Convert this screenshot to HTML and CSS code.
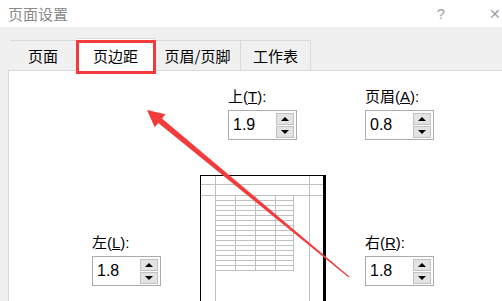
FILE: index.html
```html
<!doctype html>
<html lang="zh-CN">
<head>
    <meta charset="utf-8">
    <title>页面设置</title>
    <link rel="stylesheet" href="styles.css">
</head>
<body>
	<div class="dialog">
		<div class="titlebar">
			<span class="title">页面设置</span>
			<span class="help">?</span>
			<span class="close">&#x2715;</span>
		</div>
		<div class="cuerpo">
			<div class="tabs">
				<div class="tab t1">页面</div>
				<div class="tab t2 activa">页边距</div>
				<div class="tab t3">页眉/页脚</div>
				<div class="tab t4">工作表</div>
			</div>
			<div class="panel">
				<div class="fila-arriba">
					<div class="campo">
						<label>上(<u>T</u>):</label>
						<div class="spin"><span class="valor">1.9</span><span class="botones"><b class="up"></b><b class="down"></b></span></div>
					</div>
					<div class="campo">
						<label>页眉(<u>A</u>):</label>
						<div class="spin"><span class="valor">0.8</span><span class="botones"><b class="up"></b><b class="down"></b></span></div>
					</div>
				</div>
				<div class="fila-medio">
					<div class="campo bajo">
						<label>左(<u>L</u>):</label>
						<div class="spin"><span class="valor">1.8</span><span class="botones"><b class="up"></b><b class="down"></b></span></div>
					</div>
					<svg class="vista" width="127" height="126" viewBox="0 0 127 126">
						<g stroke="#c0c0c0" stroke-width="1" fill="none">
							<line x1="15.5" y1="1" x2="15.5" y2="126"/>
							<line x1="109.5" y1="1" x2="109.5" y2="126"/>
							<line x1="1" y1="9.5" x2="123" y2="9.5"/>
							<line x1="1" y1="20.5" x2="123" y2="20.5"/>
							<line x1="35.5" y1="20.5" x2="35.5" y2="95.5"/>
							<line x1="55.5" y1="20.5" x2="55.5" y2="95.5"/>
							<line x1="75.5" y1="20.5" x2="75.5" y2="95.5"/>
							<line x1="93.5" y1="20.5" x2="93.5" y2="95.5"/>
							<path d="M15 25.5H94M15 30.5H94M15 35.5H94M15 40.5H94M15 45.5H94M15 50.5H94M15 55.5H94M15 60.5H94M15 65.5H94M15 70.5H94M15 75.5H94M15 80.5H94M15 85.5H94M15 90.5H94M15 95.5H94"/>
						</g>
						<line x1="0.5" y1="0" x2="0.5" y2="126" stroke="#000"/>
						<line x1="0" y1="0.5" x2="125" y2="0.5" stroke="#000"/>
						<rect x="123" y="0" width="3" height="126" fill="#000"/>
					</svg>
					<div class="campo bajo derecha">
						<label>右(<u>R</u>):</label>
						<div class="spin"><span class="valor">1.8</span><span class="botones"><b class="up"></b><b class="down"></b></span></div>
					</div>
				</div>
			</div>
		</div>
		<svg class="flecha" width="502" height="301" viewBox="0 0 502 301">
			<polygon fill="#f43b3b" points="147,110 165.5,114.3 162,118.6 349.4,276.6 348.7,277.4 158.3,123 154.7,127.3"/>
		</svg>
	</div>
</body>
</html>
```

FILE: styles.css
```css
body{
	margin: 0;
	font-family: "Liberation Sans", "Noto Sans CJK SC", sans-serif;
}
.dialog{
	position: relative;
	width: 502px;
	height: 301px;
	overflow: hidden;
	background-color: #f0f0f0;
}
.titlebar{
	height: 27px;
	background-color: #fff;
	display: flex;
	align-items: center;
	color: #8a8a8a;
	font-size: 15px;
}
.title{
	margin-left: 8px;
	font-family: "Noto Sans CJK SC", sans-serif;
}
.help{
	margin-left: auto;
	margin-right: 44px;
	font-size: 15px;
	color: #a0a0a0;
}
.close{
	margin-right: 1px;
	font-size: 14px;
	color: #a0a0a0;
}
.cuerpo{
	padding-top: 13px;
	padding-left: 8px;
}
.tabs{
	display: flex;
	align-items: flex-end;
	margin-left: 2px;
	height: 30px;
}
.tab{
	height: 29px;
	border-top: 1px solid #d9d9d9;
	border-right: 1px solid #d9d9d9;
	box-sizing: content-box;
	display: flex;
	align-items: center;
	justify-content: center;
	font-family: "Noto Sans CJK SC", sans-serif;
	font-size: 15px;
	color: #000;
}
.t1{ width: 66px; }
.t2{ width: 77px; }
.t3{ width: 85px; }
.t4{ width: 69px; }
.activa{
	position: relative;
	z-index: 1;
	height: 32px;
	margin-bottom: -1px;
	background-color: #fff;
}
.activa::after{
	content: "";
	position: absolute;
	left: -1px;
	top: 1px;
	width: 80px;
	height: 34px;
	box-sizing: border-box;
	border: 3px solid #f43b3b;
}
.panel{
	height: 231px;
	background-color: #fff;
	border-top: 1px solid #d9d9d9;
	border-left: 1px solid #d9d9d9;
}
.fila-arriba{
	display: flex;
	gap: 68px;
	padding-top: 17px;
	padding-left: 219px;
}
.fila-medio{
	display: flex;
	align-items: flex-start;
	margin-top: 35px;
	padding-left: 83px;
}
.campo label{
	display: block;
	height: 18px;
	line-height: 18px;
	font-size: 15px;
	color: #000;
}
.spin{
	margin-top: 4px;
	width: 69px;
	height: 30px;
	box-sizing: border-box;
	border: 1px solid #ababab;
	display: flex;
	align-items: center;
}
.valor{
	flex: 1;
	padding-left: 4px;
	font-size: 16px;
	color: #000;
}
.botones{
	display: flex;
	flex-direction: column;
	gap: 1px;
	margin-right: 2px;
}
.botones b{
	width: 18px;
	height: 12px;
	box-sizing: border-box;
	background-color: #e3e3e3;
	border: 1px solid #c2c2c2;
	display: flex;
	align-items: center;
	justify-content: center;
}
.botones b::before{
	content: "";
	border-left: 4px solid transparent;
	border-right: 4px solid transparent;
}
.up::before{
	border-bottom: 4px solid #000;
}
.down::before{
	border-top: 4px solid #000;
}
.bajo{
	margin-top: 59px;
}
.vista{
	display: block;
	margin-left: 39px;
}
.derecha{
	margin-left: 38px;
}
.flecha{
	position: absolute;
	left: 0;
	top: 0;
	pointer-events: none;
}
```
